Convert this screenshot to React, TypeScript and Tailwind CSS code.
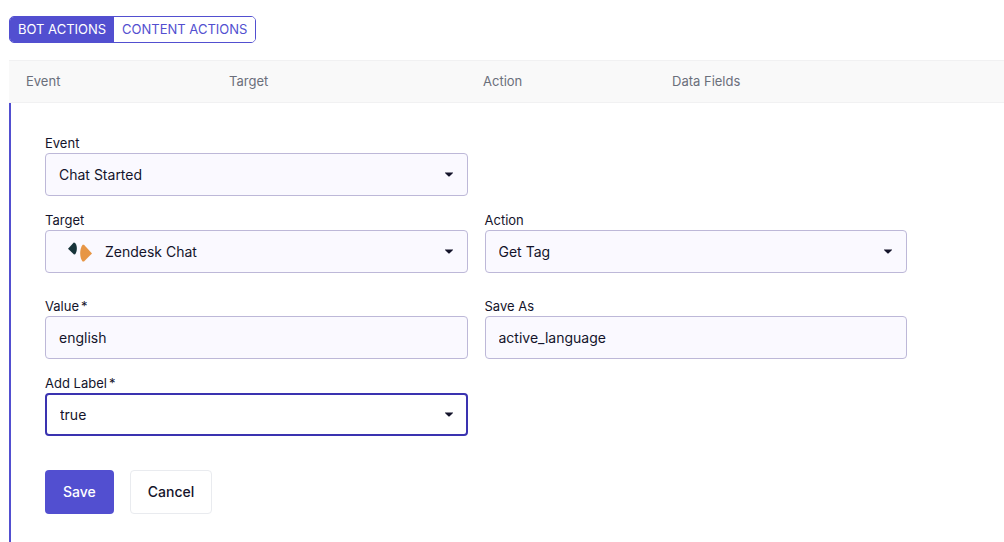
import React, { useState } from 'react';

interface FieldProps {
  id: string;
  label: string;
  required?: boolean;
  children: React.ReactNode;
}

interface SelectBoxProps {
  id: string;
  options: string[];
  active?: boolean;
  icon?: React.ReactNode;
}

const COLUMNS = ['Event', 'Target', 'Action', 'Data Fields'];
const TABS = ['BOT ACTIONS', 'CONTENT ACTIONS'];

const ZendeskIcon: React.FC = () => (
  <svg viewBox="0 0 24 20" className="h-5 w-6" aria-hidden="true">
    <path d="M0 6.8 5.8.6 7.2 1C9.4 4 9.4 9 7.2 12.2L6 12.6Z" fill="#17343a" />
    <path d="M14.6 2.8H16L24 11.4 16 19.6H14.6C11.4 15.5 11.4 7 14.6 2.8Z" fill="#e79645" />
  </svg>
);

const Field: React.FC<FieldProps> = ({ id, label, required, children }) => (
  <div>
    <label htmlFor={id} className="flex h-5 items-center gap-[2px] text-[13px] leading-5">
      {label}
      {required && <span>*</span>}
    </label>
    {children}
  </div>
);

const SelectBox: React.FC<SelectBoxProps> = ({ id, options, active, icon }) => {
  const frame = active ? 'border-2 border-[#3a33b0] bg-white' : 'border border-[#bdb8d8] bg-[#faf9ff]';

  return (
    <div className="relative">
      <select
        id={id}
        className={`block h-[43px] w-full appearance-none rounded-[4px] pr-10 text-sm outline-none ${frame} ${icon ? 'pl-[59px]' : 'pl-[13px]'}`}
      >
        {options.map((option) => (
          <option key={option}>{option}</option>
        ))}
      </select>
      {icon && <span className="pointer-events-none absolute inset-y-0 left-[23px] flex items-center">{icon}</span>}
      <span className="pointer-events-none absolute inset-y-0 right-[15px] flex items-center">
        <svg viewBox="0 0 8 5" className="h-[5px] w-2" aria-hidden="true">
          <path d="M0 .4H8V1L4.4 4.6H3.6L0 1Z" fill="#14142b" />
        </svg>
      </span>
    </div>
  );
};

const inputClasses = 'block h-[43px] w-full rounded-[4px] border border-[#bdb8d8] bg-[#faf9ff] px-[13px] text-sm outline-none';

const ActionForm: React.FC = () => (
  <form className="pt-[30px] pr-[97px] pb-12 pl-[34px]" onSubmit={(e) => e.preventDefault()}>
    <div className="grid grid-cols-2 gap-x-[17px] gap-y-[14px]">
      <div className="col-span-2 grid grid-cols-2 gap-x-[17px]">
        <Field id="event" label="Event">
          <SelectBox id="event" options={['Chat Started', 'Chat Ended']} />
        </Field>
      </div>
      <Field id="target" label="Target">
        <SelectBox id="target" options={['Zendesk Chat']} icon={<ZendeskIcon />} />
      </Field>
      <Field id="action" label="Action">
        <SelectBox id="action" options={['Get Tag', 'Add Tag']} />
      </Field>
    </div>
    <div className="mt-[23px] grid grid-cols-2 gap-x-[17px] gap-y-[14px]">
      <Field id="value" label="Value" required>
        <input id="value" type="text" defaultValue="english" className={inputClasses} />
      </Field>
      <Field id="save-as" label="Save As">
        <input id="save-as" type="text" defaultValue="active_language" className={inputClasses} />
      </Field>
      <Field id="add-label" label="Add Label" required>
        <SelectBox id="add-label" options={['true', 'false']} active />
      </Field>
    </div>
    <div className="mt-[34px] flex gap-4">
      <button type="submit" className="h-11 rounded-[4px] bg-[#524fd0] px-[18px] text-sm font-medium text-white">
        Save
      </button>
      <button type="button" className="h-11 rounded-[4px] border border-[#e9ebef] bg-white px-[17px] text-sm font-medium">
        Cancel
      </button>
    </div>
  </form>
);

const App: React.FC = () => {
  const [tab, setTab] = useState(TABS[0]);

  return (
    <main className="min-h-screen overflow-hidden bg-white pt-4 pl-[9px] font-['Inter',sans-serif] text-[#14142b]">
      <div className="flex h-[27px] w-fit overflow-hidden rounded-[5px] border border-[#524fd0]">
        {TABS.map((name) => (
          <button
            key={name}
            type="button"
            onClick={() => setTab(name)}
            className={`px-2 pt-px text-[13px] ${tab === name ? 'bg-[#524fd0] text-white' : 'bg-white text-[#524fd0]'}`}
          >
            {name}
          </button>
        ))}
      </div>

      <table className="mt-[17px] w-full table-fixed border-collapse">
        <colgroup>
          <col className="w-[203px]" />
          <col className="w-[254px]" />
          <col className="w-[189px]" />
          <col />
        </colgroup>
        <thead>
          <tr className="h-[42px] border-y border-[#f1f1f2] bg-[#f9f9f9]">
            {COLUMNS.map((column) => (
              <th key={column} scope="col" className="px-[17px] text-left text-[13px] font-normal text-[#6b6f7b]">
                {column}
              </th>
            ))}
          </tr>
        </thead>
        <tbody>
          <tr>
            <td colSpan={4} className="p-0">
              <div className="min-h-[440px] border-l-2 border-[#524fd0]">
                <ActionForm />
              </div>
            </td>
          </tr>
        </tbody>
      </table>
    </main>
  );
};

export default App;
